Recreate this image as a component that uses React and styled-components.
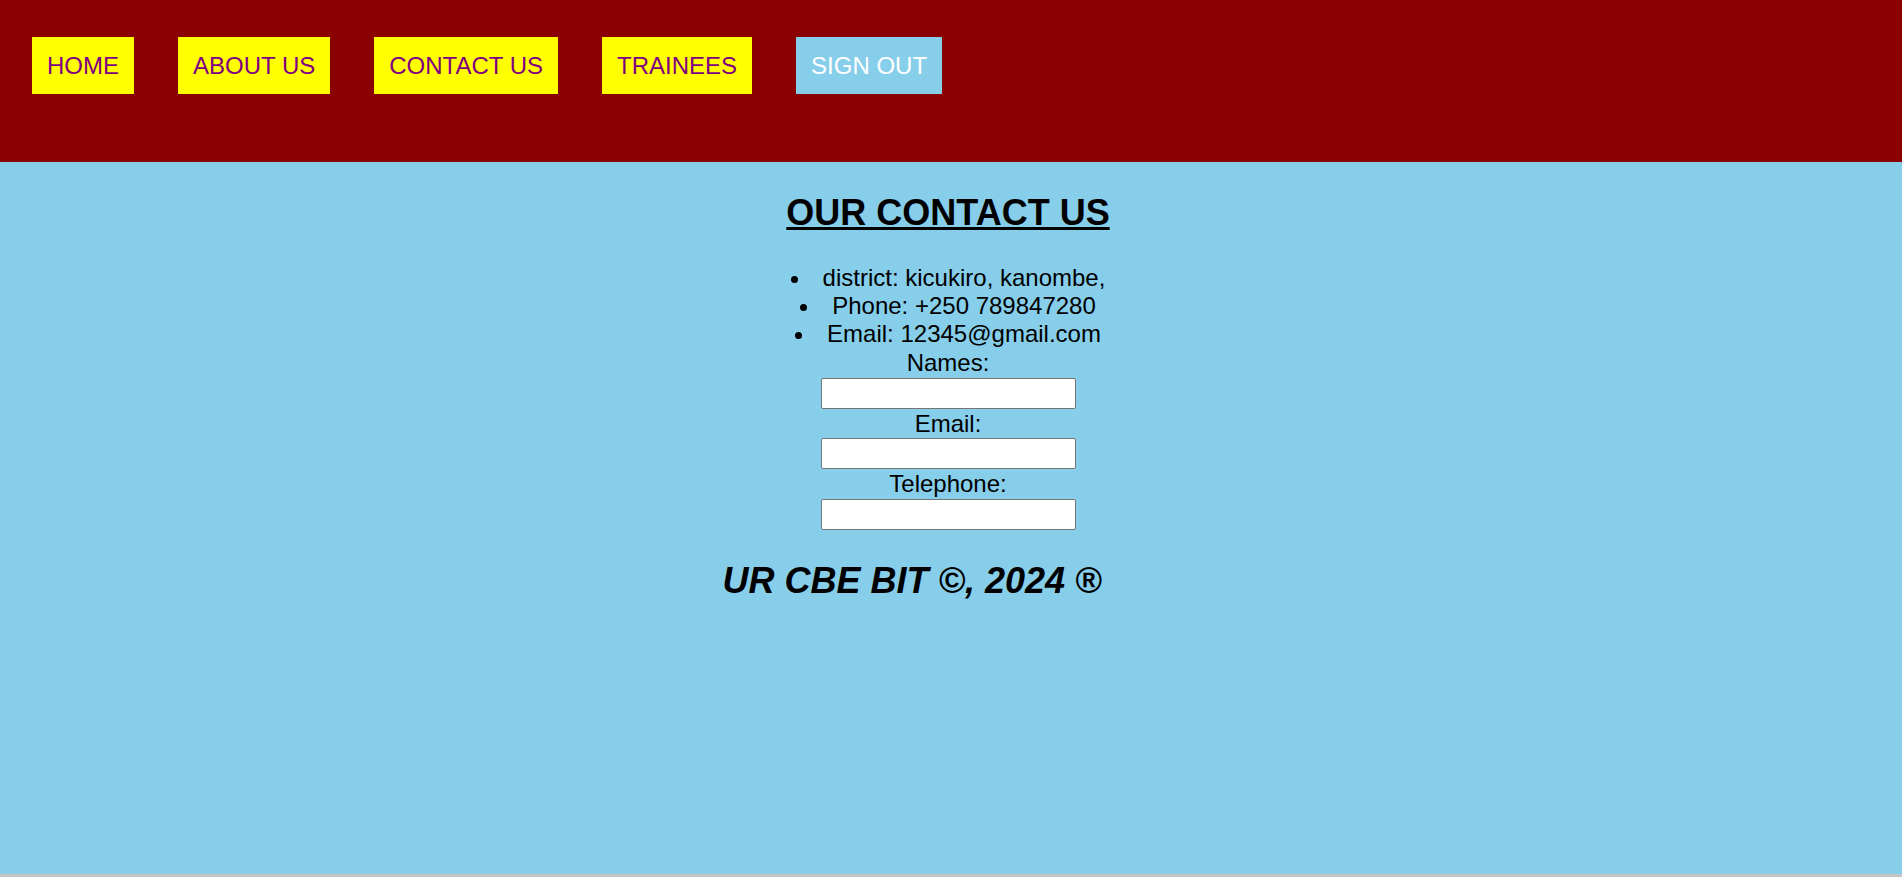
import React from 'react';
import styled, { createGlobalStyle } from 'styled-components';

const GlobalStyle = createGlobalStyle`
	html {
		background-color: #c6c6c6;
	}
	body {
		margin: 0;
		font-family: 'Liberation Sans', Arial, sans-serif;
		font-size: 24px;
	}
`;

const Page = styled.div`
	min-height: 874px;
	background-color: #87ceeb;
	display: flex;
	flex-direction: column;
`;

const Header = styled.header`
	height: 162px;
	box-sizing: border-box;
	background-color: #8b0000;
	padding: 37px 0 0 32px;
`;

const NavList = styled.ul`
	list-style: none;
	margin: 0;
	padding: 0;
	display: flex;
	gap: 44px;
`;

const NavLink = styled.a`
	display: block;
	padding: 15px;
	line-height: 27px;
	text-decoration: none;
	text-transform: uppercase;
	background-color: ${(p) => (p.$active ? '#87ceeb' : '#ffff00')};
	color: ${(p) => (p.$active ? '#ffffff' : '#800080')};
`;

const Main = styled.main`
	padding: 0 6px 0 0;
	text-align: center;
	color: #000;
`;

const Title = styled.h2`
	font-size: 36px;
	font-weight: bold;
	text-decoration: underline;
	margin: 30px 0 31px;
	line-height: 41.4px;
`;

const ContactList = styled.ul`
	list-style: disc inside;
	margin: 0;
	padding: 0;
	li {
		line-height: 27.8px;
	}
`;

const Form = styled.form`
	display: flex;
	flex-direction: column;
	align-items: center;
	label {
		line-height: 29.8px;
	}
	input {
		width: 255px;
		height: 31px;
		box-sizing: border-box;
		border: 1px solid #767676;
		border-radius: 2px;
		background: #fff;
		margin: 0;
		padding: 1px 2px;
	}
`;

const Footer = styled.h2`
	font-size: 36px;
	font-style: italic;
	font-weight: bold;
	line-height: 41.4px;
	margin: 30px 0;
	padding-right: 72px;
`;

const links = [
	{ label: 'Home' },
	{ label: 'About us' },
	{ label: 'Contact us' },
	{ label: 'Trainees' },
	{ label: 'Sign out', active: true },
];

const App = () => {
	return (
		<Page>
			<GlobalStyle />
			<Header>
				<NavList>
					{links.map((l) => (
						<li key={l.label}>
							<NavLink href='#' $active={l.active}>
								{l.label}
							</NavLink>
						</li>
					))}
				</NavList>
			</Header>
			<Main>
				<Title>OUR CONTACT US</Title>
				<ContactList>
					<li>district: kicukiro, kanombe,</li>
					<li>Phone: +250 789847280</li>
					<li>Email: 12345@gmail.com</li>
				</ContactList>
				<Form onSubmit={(e) => e.preventDefault()}>
					<label htmlFor='names'>Names:</label>
					<input id='names' type='text' />
					<label htmlFor='email'>Email:</label>
					<input id='email' type='email' />
					<label htmlFor='tel'>Telephone:</label>
					<input id='tel' type='tel' />
				</Form>
				<Footer>UR CBE BIT ©, 2024 ®</Footer>
			</Main>
		</Page>
	);
};

export default App;
